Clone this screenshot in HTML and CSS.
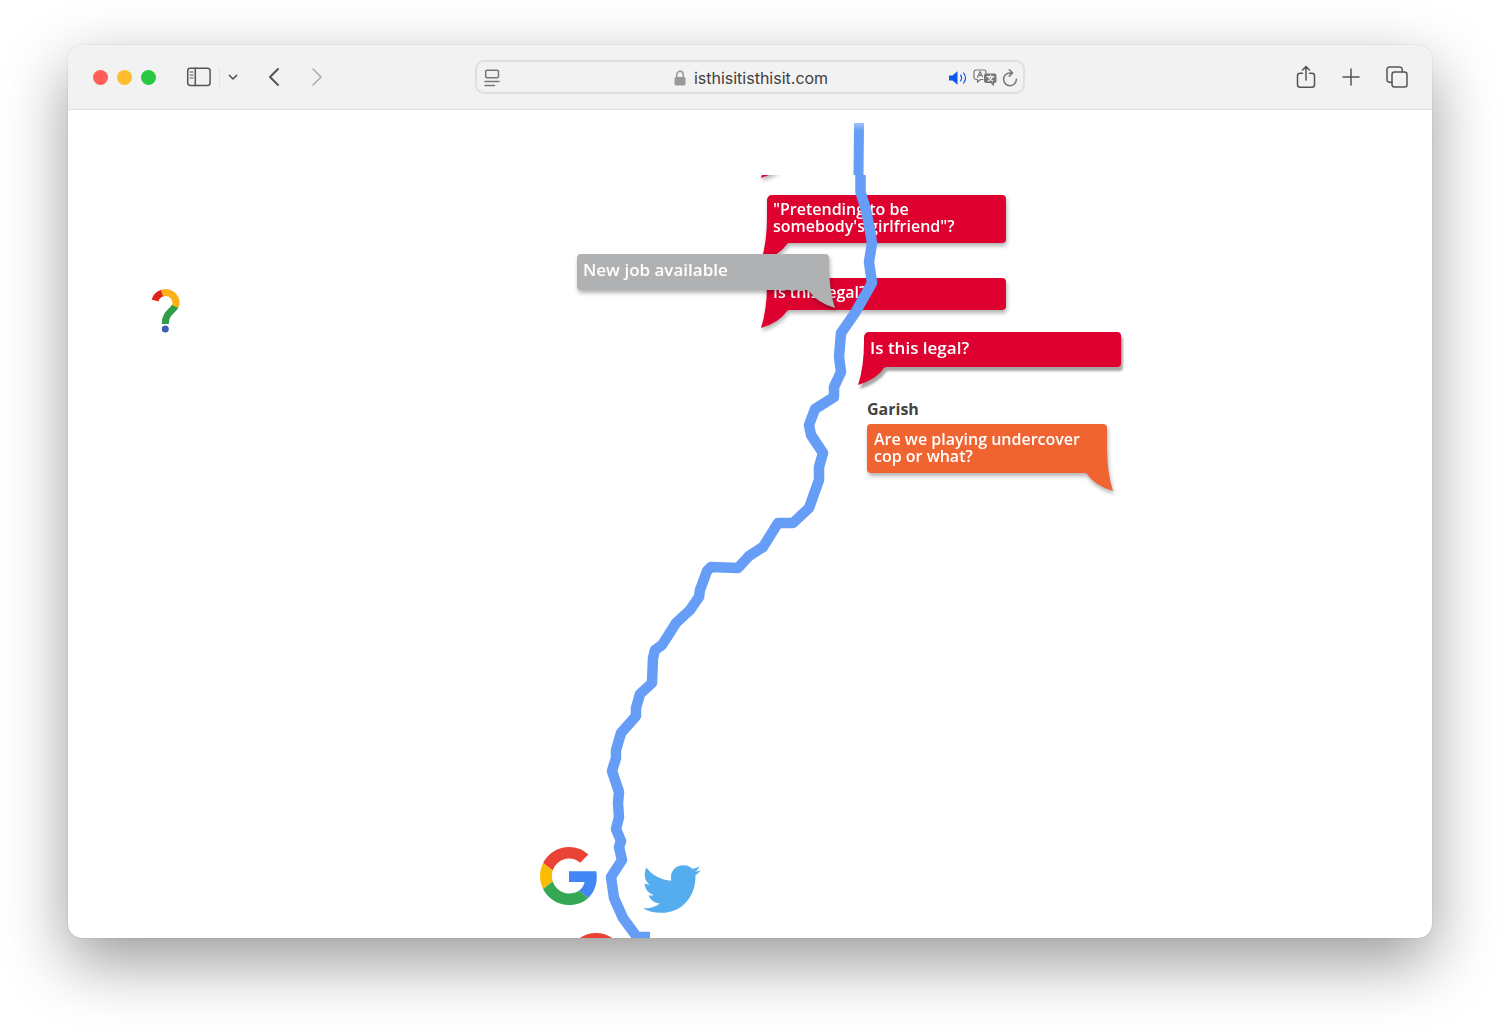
FILE: index.html
```html
<!DOCTYPE html>
<html lang="en">
<head>
<meta charset="utf-8">
<meta name="viewport" content="width=device-width, initial-scale=1">
<title>isthisitisthisit.com</title>
<link rel="stylesheet" href="styles.css">
</head>
<body>
<svg class="defs" width="0" height="0" aria-hidden="true">
  <symbol id="tail-left" viewBox="0 0 28 44"><path d="M6 0Q6 26 0 44Q19 38 26 27L28 26V0Z"/></symbol>
  <symbol id="tail-right" viewBox="0 0 28 44"><path d="M22 0Q22 26 28 44Q9 38 2 27L0 26V0Z"/></symbol>
  <symbol id="google" viewBox="0 0 48 48">
    <path fill="#ea4335" d="M24 9.5c3.54 0 6.71 1.22 9.21 3.6l6.85-6.85C35.9 2.38 30.47 0 24 0 14.62 0 6.51 5.38 2.56 13.22l7.98 6.19C12.43 13.72 17.74 9.5 24 9.5z"/>
    <path fill="#4285f4" d="M46.98 24.55c0-1.57-.15-3.09-.38-4.55H24v9.02h12.94c-.58 2.96-2.26 5.48-4.78 7.18l7.73 6c4.51-4.18 7.09-10.36 7.09-17.65z"/>
    <path fill="#fbbc05" d="M10.53 28.59c-.48-1.45-.76-2.99-.76-4.59s.27-3.14.76-4.59l-7.98-6.19C.92 16.46 0 20.12 0 24c0 3.88.92 7.54 2.56 10.78l7.97-6.19z"/>
    <path fill="#34a853" d="M24 48c6.48 0 11.93-2.13 15.89-5.81l-7.73-6c-2.15 1.45-4.92 2.3-8.16 2.3-6.26 0-11.57-4.22-13.47-9.91l-7.98 6.19C6.51 42.62 14.62 48 24 48z"/>
  </symbol>
</svg>

<main class="window">
  <header class="toolbar">
    <div class="tools tools-left">
      <div class="lights">
        <button class="light close" aria-label="Close"></button>
        <button class="light minimise" aria-label="Minimise"></button>
        <button class="light expand" aria-label="Full screen"></button>
      </div>
      <div class="sidebar-tools">
        <button class="tool" aria-label="Sidebar">
          <svg width="26" height="20" viewBox="0 0 26 20"><rect x="1.7" y="1.2" width="22.4" height="17.2" rx="2.6"/><path d="M9.3 1.2v17.2"/><path class="thin" d="M4 5h3M4 8h3M4 11h3"/></svg>
        </button>
        <span class="divider"></span>
        <button class="tool" aria-label="Tab groups">
          <svg width="12" height="12" viewBox="0 0 12 12"><path d="M2.4 4.4 6 8l3.600-3.600"/></svg>
        </button>
      </div>
      <div class="history">
        <button class="tool" aria-label="Back"><svg width="14" height="20" viewBox="0 0 14 20"><path class="bold" d="M11 2 3 10l8 8"/></svg></button>
        <button class="tool dim" aria-label="Forward"><svg width="14" height="20" viewBox="0 0 14 20"><path d="M3 2l8 8-8 8"/></svg></button>
      </div>
    </div>

    <form class="address">
      <button type="button" class="tool soft" aria-label="Page menu">
        <svg width="16" height="18" viewBox="0 0 16 18"><rect x="1.700" y="1.200" width="12.800" height="7.600" rx="1.200"/><path d="M1 12.600h14M1 16.600h9.500"/></svg>
      </button>
      <label class="location">
        <svg width="12" height="16" viewBox="0 0 12 16"><rect class="solid" x=".5" y="7" width="11" height="8.500" rx="1.500"/><path d="M2.800 7.500V4.500a3.200 3.200 0 0 1 6.400 0v3"/></svg>
        <input type="text" value="isthisitisthisit.com" aria-label="Address">
      </label>
      <div class="page-tools">
        <button type="button" class="tool sound" aria-label="Mute">
          <svg width="20" height="16" viewBox="0 0 20 16"><path class="solid" d="M1 5.500h3.500L9.500 1.200v13.600L4.500 10.500H1z"/><path class="fine" d="M12.600 5.200q2 2.800 0 5.600M15.600 3q3.800 5 0 10"/></svg>
        </button>
        <button type="button" class="tool soft" aria-label="Translate">
          <svg width="24" height="18" viewBox="0 0 24 18"><path class="fine" d="M10 10.500H7.500L4.500 13.200v-2.700H3a2 2 0 0 1-2-2V3a2 2 0 0 1 2-2h8a2 2 0 0 1 2 2v1.500"/><path class="fine" d="m4.500 8.500 2.600-6 2.400 5.200M5.400 6.400h3.300"/><path class="solid" d="M13 4.500h8.500a2 2 0 0 1 2 2V12a2 2 0 0 1-2 2H21v3.200L17.500 14H13a2 2 0 0 1-2-2V6.500a2 2 0 0 1 2-2z"/><path class="cut" d="M14 7.600h7M17.500 6v1.500M15.200 12q3.800-1.600 4.200-4.300M19.900 12q-3.800-1.600-4.300-4.300"/></svg>
        </button>
        <button type="button" class="tool soft" aria-label="Reload">
          <svg width="16" height="18" viewBox="0 0 16 18"><path d="M14.400 10.200A6.400 6.400 0 1 1 8 3.900h2.400M7.300.8l3.200 3.100L7.300 7.100"/></svg>
        </button>
      </div>
    </form>

    <div class="tools tools-right">
      <button class="tool" aria-label="Share"><svg width="20" height="24" viewBox="0 0 20 24"><path d="M6.500 8.200H4a2.500 2.500 0 0 0-2.500 2.500v9A2.500 2.500 0 0 0 4 22.200h12a2.500 2.500 0 0 0 2.500-2.500v-9A2.500 2.500 0 0 0 16 8.200h-2.500M10 15V1.500M6.500 5 10 1.500 13.500 5"/></svg></button>
      <button class="tool" aria-label="New tab"><svg width="18" height="18" viewBox="0 0 18 18"><path d="M9 1v16M1 9h16"/></svg></button>
      <button class="tool" aria-label="Tab overview"><svg width="22" height="22" viewBox="0 0 22 22"><path d="M6 16.200H3.500a2.500 2.500 0 0 1-2.500-2.500V3.500A2.500 2.500 0 0 1 3.500 1h10.200a2.500 2.500 0 0 1 2.500 2.500V6"/><rect x="6" y="6" width="15" height="15" rx="2.500"/></svg></button>
    </div>
  </header>

  <section class="stage">
    <div class="thread">
      <p class="bubble red from-left earlier"><svg class="tail"><use href="#tail-left"/></svg></p>
      <p class="bubble red from-left pretending">"Pretending to be somebody's girlfriend"?<svg class="tail"><use href="#tail-left"/></svg></p>
      <p class="bubble red from-left legal">Is this legal?<svg class="tail"><use href="#tail-left"/></svg></p>
    </div>

    <svg class="river" viewBox="68 110 1364 828" aria-hidden="true">
      <defs><linearGradient id="fade" gradientUnits="userSpaceOnUse" x1="0" y1="122" x2="0" y2="131"><stop offset="0" stop-color="#a9c8fb"/><stop offset="1" stop-color="#669df6"/></linearGradient></defs>
      <path fill="url(#fade)" d="M854 123h10l-.5 52h-10z"/>
      <path class="course" d="M860.500 175V192L866 210 869 225 872 243 869 262 872 283 855 313 841 333 839 357 841 372 834 387V397L815 409 809 425 811 435 823 453 819 467V480L809 508 793 523H778L763 547 749 556 738 568 711 567 707 571 700 590 699 597 690 610 676 623 671 631 662 645 655 650 653 658 652 683 640 694 636 708V716L621 733 616 750V758L612 771 619 792 618 803 619 817 616 829 621 841 619 847 622 860 611 877 614 898 623 918 637 937H650"/>
    </svg>

    <p class="bubble grey from-right large job">New job available<svg class="tail"><use href="#tail-right"/></svg></p>
    <p class="bubble red from-left large lifted legal-again">Is this legal?<svg class="tail"><use href="#tail-left"/></svg></p>
    <div class="garish">
      <h2>Garish</h2>
      <p class="bubble orange from-right">Are we playing undercover cop or what?<svg class="tail"><use href="#tail-right"/></svg></p>
    </div>

    <svg class="pin question" viewBox="10 8 32 46" role="img" aria-label="Question">
      <g fill="none" stroke-width="7"><path stroke="#e2231a" d="M15 20.500Q16.500 15 22.500 13"/><path stroke="#fbb116" d="M22 13.200C30 10.500 36 17 36 23Q36 25 34.500 27.500"/><path stroke="#2e9e49" d="M35 26.500C32.500 31.500 25 33 25.300 44"/></g>
      <circle cx="25.300" cy="49" r="3.500" fill="#3c5fb5"/>
    </svg>
    <svg class="pin google-one" role="img" aria-label="Google"><use href="#google"/></svg>
    <svg class="pin google-two" role="img" aria-label="Google"><use href="#google"/></svg>
    <svg class="pin twitter" viewBox="338 104 175 144" role="img" aria-label="Twitter"><path fill="#55acee" d="M348 111C365 135 393 149 423 151C418 120 438 104 460 104C472 104 481 109 487 115C494 114 502 111 508 107C506 114 501 120 495 124C501 123 507 122 513 119C508 126 502 131 496 135C499 190 462 248 392 248C372 248 353 243 338 234C358 236 375 231 389 220C373 219 360 209 355 195C360 196 366 196 371 194C354 190 343 176 343 159C348 162 354 163 359 164C343 152 339 130 348 111Z"/></svg>
  </section>
</main>
</body>
</html>
```
FILE: styles.css
```css
* { box-sizing: border-box; }

body {
  margin: 0;
  min-height: 100vh;
  display: flex;
  padding: 45px 68px 91px;
  background: #fff;
  font-family: "Open Sans", "Noto Sans", sans-serif;
}

.defs { position: absolute; }

.window {
  flex: 1;
  min-width: 0;
  display: flex;
  flex-direction: column;
  overflow: hidden;
  border-radius: 14px;
  background: #fff;
  box-shadow: 0 0 1px rgba(0, 0, 0, .35), 0 24px 64px rgba(0, 0, 0, .4);
}

/* Toolbar */

.toolbar {
  display: grid;
  grid-template-columns: 1fr minmax(0, 550px) 1fr;
  align-items: center;
  height: 65px;
  background: #f2f2f2;
  border-bottom: 1px solid #dedede;
}

.tools, .lights, .sidebar-tools, .history, .page-tools, .location {
  display: flex;
  align-items: center;
}

.tools-left { padding-left: 25px; gap: 28px; }
.tools-right { justify-content: flex-end; padding-right: 24px; gap: 26px; }
.lights { gap: 9px; padding-right: 2px; }
.sidebar-tools { gap: 7px; }
.history { gap: 29px; }

.light {
  width: 15px;
  height: 15px;
  padding: 0;
  border: 0;
  border-radius: 50%;
}
.close { background: #ff5f57; }
.minimise { background: #febc2e; }
.expand { background: #28c840; }

.tool {
  display: flex;
  padding: 0;
  border: 0;
  background: none;
  color: #555;
}
.tool svg, .location svg {
  fill: none;
  stroke: currentColor;
  stroke-width: 1.5;
  stroke-linecap: round;
  stroke-linejoin: round;
}
.tool .thin { stroke-width: 1; }
.tool .bold { stroke-width: 2; }
.tool .fine { stroke-width: 1.2; }
.tool .solid, .location .solid { fill: currentColor; stroke: none; }
.tool .cut { stroke: #f2f2f2; stroke-width: 1.2; }
.dim { color: #aaa; }
.soft { color: #777; }
.sound { color: #0b57e8; }

.divider { width: 1px; height: 20px; background: #e2e2e2; }

.address {
  display: grid;
  grid-template-columns: 1fr auto 1fr;
  align-items: center;
  height: 34px;
  margin: 0;
  padding: 2px 5px 0 7px;
  border: 2px solid #dfdfdf;
  border-radius: 9px;
}
.location { gap: 8px; color: #999; }
.location input {
  field-sizing: content;
  padding: 0;
  border: 0;
  outline: 0;
  background: none;
  color: #404040;
  font: 16px/20px Inter, "Liberation Sans", sans-serif;
}
.page-tools { justify-content: flex-end; gap: 5px; }

/* Stage: a free canvas of speech bubbles and logos */

.stage {
  position: relative;
  flex: 1;
  min-height: 828px;
  overflow: hidden;
}

.thread {
  position: absolute;
  left: 690px;
  top: 65px;
  width: 260px;
  height: 200px;
  overflow: hidden;
}

.river {
  position: absolute;
  left: 0;
  top: 0;
  width: 1364px;
  height: 828px;
}
.course {
  fill: none;
  stroke: #669df6;
  stroke-width: 10.5;
  stroke-linejoin: round;
}

.bubble {
  position: relative;
  margin: 0;
  width: 239px;
  padding: 6px;
  border-radius: 4px;
  color: #fff;
  font-size: 16px;
  font-weight: 600;
  line-height: 17px;
  filter: drop-shadow(1px 3px 2px rgba(0, 0, 0, .3));
}
.red { background: #de002f; fill: #de002f; }
.grey { background: #b0b1b3; fill: #b0b1b3; }
.orange { background: #f06432; fill: #f06432; }
.large { font-size: 17px; padding: 7px 6px; line-height: 18px; }
.lifted { filter: drop-shadow(2px 4px 1px rgba(0, 0, 0, .35)); }

.tail {
  position: absolute;
  bottom: -18px;
  width: 28px;
  height: 44px;
  z-index: -1;
}
.from-left { border-top-left-radius: 5px; border-bottom-left-radius: 0; }
.from-left .tail { left: -6px; }
.from-right { border-bottom-right-radius: 0; }
.from-right .tail { right: -6px; }

.thread .bubble { position: absolute; left: 9px; }
.earlier { top: -47px; height: 32px; }
.pretending { top: 20px; height: 48px; }
.legal { top: 103px; height: 32px; }

.job { position: absolute; left: 509px; top: 144px; width: 252px; height: 36px; }
.legal-again { position: absolute; left: 796px; top: 222px; width: 257px; height: 35px; }
.garish { position: absolute; left: 799px; top: 289px; }
.garish h2 {
  margin: 0 0 5px;
  color: #444;
  font-size: 16px;
  font-weight: 700;
  line-height: 20px;
}
.garish .bubble { width: 240px; height: 49px; padding: 7px; }

.pin { position: absolute; }
.question { left: 82px; top: 178px; width: 32px; height: 46px; }
.google-one { left: 472px; top: 737px; width: 58px; height: 58px; }
.google-two { left: 499px; top: 823px; width: 58px; height: 58px; }
.twitter { left: 575px; top: 755px; width: 58px; height: 48px; }
```
